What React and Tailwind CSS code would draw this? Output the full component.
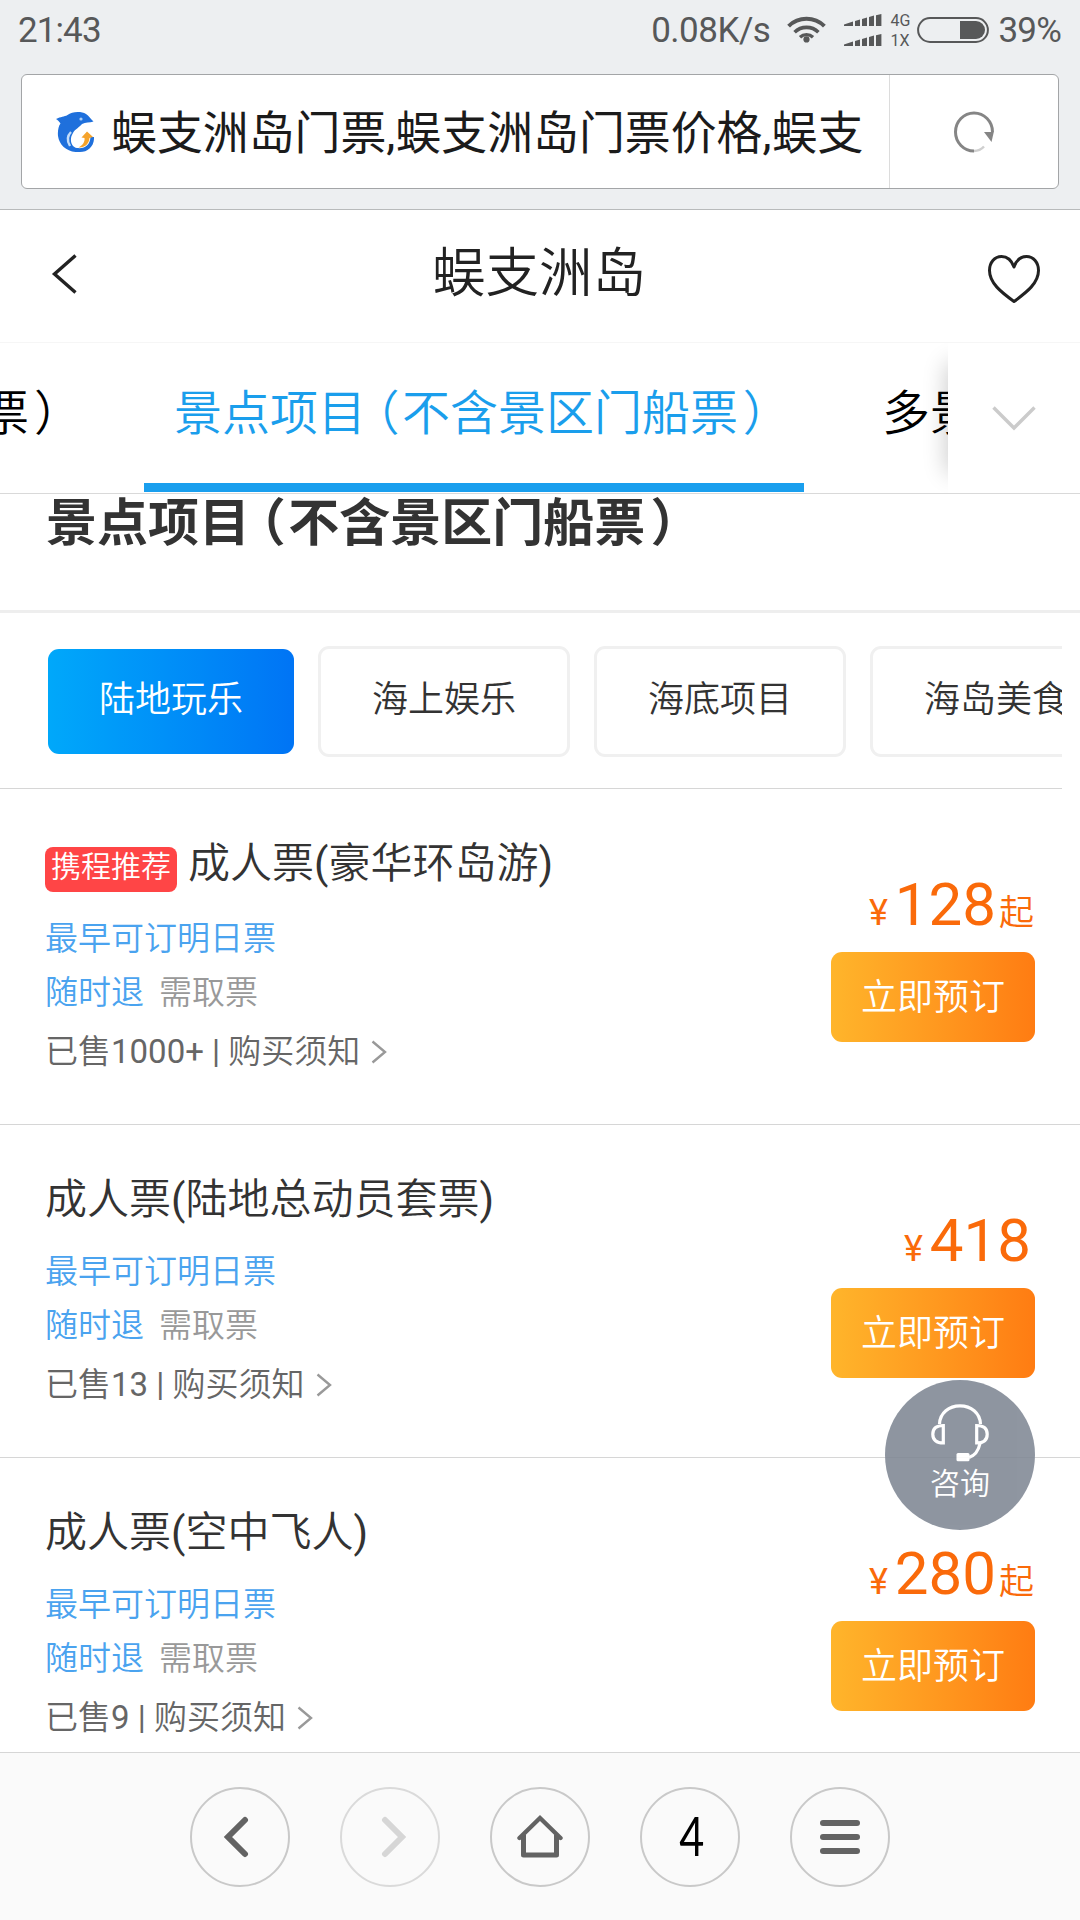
import React from "react";

const tickets = [
  { badge: "携程推荐", name: "成人票", detail: "豪华环岛游", sold: "1000+", price: "128", from: true },
  { name: "成人票", detail: "陆地总动员套票", sold: "13", price: "418", from: false },
  { name: "成人票", detail: "空中飞人", sold: "9", price: "280", from: true },
];

function WifiIcon() {
  return (
    <svg width="39" height="28" viewBox="0 0 39 28" fill="none" stroke="#575859" strokeWidth="4">
      <path d="M1.6 11.2a25.5 25.5 0 0 1 35.8 0" />
      <path d="M7.6 17.2a17 17 0 0 1 23.8 0" strokeWidth="3.6" />
      <path d="M13 22.2a9.6 9.6 0 0 1 13 0" strokeWidth="3.4" />
      <circle cx="19.5" cy="24.4" r="3.1" fill="#575859" stroke="none" />
    </svg>
  );
}

function Signal() {
  return (
    <svg width="38" height="12" viewBox="0 0 38 12" fill="#575859">
      <path d="M0 12V10.6L9 7.6V12zM11 12V7l5-1.6V12zM18 12V4.9l5-1.5V12zM25 12V3l5-1.4V12zM32 12V1.2L37.4 0V12z" />
    </svg>
  );
}

function Battery() {
  return (
    <svg width="72" height="26" viewBox="0 0 72 26">
      <rect x="1.1" y="1.1" width="69.8" height="23.8" rx="11.9" fill="none" stroke="#575859" strokeWidth="2" />
      <path d="M43 4h16a9 9 0 0 1 0 18H43z" fill="#575859" />
    </svg>
  );
}

function StatusBar() {
  return (
    <div className="flex h-[74px] items-start pr-[19px] pl-[18px] text-[35px] text-[#575859]">
      <span className="mt-[11px] leading-[40px] tracking-[-0.9px]">21:43</span>
      <div className="ml-auto flex items-start">
        <span className="mt-[11px] leading-[40px] tracking-[-0.5px]">0.08K/s</span>
        <span className="mt-[15px] ml-[17px]"><WifiIcon /></span>
        <span className="mt-[14px] ml-[18px] flex flex-col gap-[8px]">
          <Signal />
          <Signal />
        </span>
        <span className="mt-[11px] ml-[8px] flex w-[27px] flex-col text-[16px] leading-[20px]">
          <span>4G</span>
          <span>1X</span>
        </span>
        <span className="mt-[17px]"><Battery /></span>
        <span className="mt-[11px] ml-[9px] leading-[40px] tracking-[-0.8px]">39%</span>
      </div>
    </div>
  );
}

function Dolphin() {
  return (
    <svg width="38" height="40" viewBox="0 0 38 40">
      <path d="M0 7C5 4.500 8 5 11.500 3 16-.5 25-1 30 2c3 1.800 4 4.500 7.500 7.500-4 1.500-8 .5-11.500 2.500C24 15 19 17 17 21c-4 6-2 14 4 15 8 1 13-3 13.500-11L38 25c.5 9-6 15-14 15C12 41 3.500 34 2 24 1.500 19 2.500 14 4.500 11.500 3 9 1.500 8 0 7z" fill="#1f70dc" />
      <path d="M15 20c-4 4-4 9-1 14" fill="none" stroke="#c3dcf8" strokeWidth="2.400" />
      <path d="M31 19.500l6 5.500-3.500 1c-.5 6-5 10-11 9.500C27 33 29 30 28.500 26l-3-.500z" fill="#f5a32b" />
      <circle cx="25" cy="7" r="1.600" fill="#a9cdf6" />
    </svg>
  );
}

function AddressBar() {
  return (
    <div className="mx-[21px] flex h-[115px] rounded-[6px] border border-[#a3a5a7] bg-white">
      <div className="flex w-[868px] items-center border-r border-[#dcdcdc] pl-[34px]">
        <Dolphin />
        <span className="mt-[3px] ml-[17px] text-[45.9px] whitespace-nowrap text-[#1b1b1b]">蜈支洲岛门票,蜈支洲岛门票价格,蜈支</span>
      </div>
      <div className="flex flex-1 items-center justify-center">
        <svg width="42" height="42" viewBox="0 0 42 42" fill="none">
          <path d="M39.500 21A18.500 19 0 1 0 21 40" stroke="#858585" strokeWidth="3" />
          <path d="M21 40q6 0 10-4.500" stroke="#cfcfcf" strokeWidth="2.400" />
          <path d="M31 21h9.800l-2.300 10z" fill="#858585" />
        </svg>
      </div>
    </div>
  );
}

function PageHeader() {
  return (
    <div className="flex h-[133px] items-start border-b border-[#f6f6f6] pr-[39px] pl-[51px]">
      <svg className="mt-[44px]" width="54" height="40" viewBox="0 0 54 40" fill="none" stroke="#222" strokeWidth="3.400">
        <path d="M24.500 1.500L3.500 20 24.500 38.500" />
      </svg>
      <h1 className="mt-[33px] ml-[327px] text-[53.5px] leading-[62px] text-[#222]">蜈支洲岛</h1>
      <svg className="mt-[44px] ml-auto" width="54" height="50" viewBox="0 0 54 50" fill="none" stroke="#222" strokeWidth="3" strokeLinejoin="round">
        <path d="M27 13C24.500 6 19.500 2.500 14.500 2.500 7.500 2.500 2.500 8.500 2.500 16.500 2.500 29 14 38 27 47.500 40 38 51.500 29 51.500 16.500 51.500 8.500 46.500 2.500 39.500 2.500 34.500 2.500 29.500 6 27 13z" />
      </svg>
    </div>
  );
}

/* Full-width brackets set on half-width advances with a little air around them. */
function SectionName() {
  return (
    <>
      景点项目<span className="mr-[0.05em] ml-[0.2em] [font-feature-settings:'halt']">（</span>不含景区门船票<span className="mr-[0.15em] ml-[0.1em] [font-feature-settings:'halt']">）</span>
    </>
  );
}

function Tabs() {
  return (
    <div className="relative flex h-[151px] overflow-hidden border-b border-[#d9d9d9] text-[48px] leading-[56px] whitespace-nowrap">
      <div className="flex w-[144px] shrink-0 overflow-hidden pt-[43px] text-black">
        <span className="-ml-[19px]">票<span className="ml-[5px]">）</span></span>
      </div>
      <div className="flex w-[660px] shrink-0 flex-col justify-between pt-[43px] text-[#1a9eec]">
        <span className="pl-[30px]"><SectionName /></span>
        <span className="mb-px h-[9px] bg-[#1a9fee]" />
      </div>
      <span className="pt-[43px] pl-[78px] text-black">多景</span>
      <div className="absolute top-0 right-0 flex h-[150px] w-[132px] items-start justify-end bg-white pt-[62px] pr-[44px] shadow-[-22px_0_22px_-20px_rgba(0,0,0,0.2)]">
        <svg width="44" height="27" viewBox="0 0 44 27" fill="none" stroke="#cbcbcb" strokeWidth="3.400">
          <path d="M1.500 2.500L22 23 42.500 2.500" />
        </svg>
      </div>
    </div>
  );
}

function Chip({ children }) {
  return (
    <span className="h-[111px] w-[252px] shrink-0 rounded-[11px] border-[3px] border-[#f0f0f0] text-center leading-[103px]">
      {children}
    </span>
  );
}

function Filters() {
  return (
    <div className="mr-[18px] flex h-[176px] shrink-0 items-center gap-[24px] overflow-hidden border-b border-[#d6d6d6] pt-[2px] pl-[48px] text-[36px] text-[#333]">
      <span className="h-[105px] w-[246px] shrink-0 rounded-[11px] bg-linear-to-r from-[#00a8fa] to-[#0074f5] text-center leading-[103px] text-white">
        陆地玩乐
      </span>
      <Chip>海上娱乐</Chip>
      <Chip>海底项目</Chip>
      <Chip>海岛美食</Chip>
    </div>
  );
}

function Ticket({ badge, name, detail, sold, price, from }) {
  return (
    <div className="flex shrink-0 justify-between border-b border-[#d6d6d6] pr-[45px] pb-[44px] pl-[45px]">
      <div className="flex flex-col pt-[48px] text-[33px] leading-[54px] text-[#666]">
        <div className="mb-[18px] flex text-[42px] text-[#333]">
          {badge && (
            <span className="mt-[10px] mr-[11px] mb-[2px] h-[45px] w-[132px] rounded-[8px] bg-[#ff4546] text-center text-[30px] leading-[40px] text-white">
              {badge}
            </span>
          )}
          <span>
            {name}<span className="font-normal">(</span>{detail}<span className="font-normal">)</span>
          </span>
        </div>
        <div className="text-[#4aa3ef]">最早可订明日票</div>
        <div className="flex gap-[15px]">
          <span className="text-[#4aa3ef]">随时退</span>
          <span className="text-[#999]">需取票</span>
        </div>
        <div className="mt-[5px] mb-px flex items-center">
          <span>已售<span className="font-normal">{sold} | </span>购买须知</span>
          <svg className="ml-[11px]" width="16" height="24" viewBox="0 0 16 24" fill="none" stroke="#999" strokeWidth="2.400">
            <path d="M1.500 1.500L14 12 1.500 22.500" />
          </svg>
        </div>
      </div>
      <div className="flex w-[204px] flex-col pt-[80px]">
        <div className={from ? "flex items-baseline justify-end pr-px text-[#fa6a0a]" : "flex items-baseline justify-end pr-[4px] text-[#fa6a0a]"}>
          <span className="mr-[7px] text-[36px] font-normal">¥</span>
          <span className="text-[60px] leading-[72px] font-normal">{price}</span>
          {from && <span className="ml-[3px] text-[35px] leading-[36px]">起</span>}
        </div>
        <button className="mt-[11px] h-[90px] rounded-[11px] bg-linear-to-r from-[#ffb52b] to-[#ff7c12] pt-[2px] text-[36px] leading-[88px] text-white">
          立即预订
        </button>
      </div>
    </div>
  );
}

function ConsultButton() {
  return (
    <div className="absolute top-[1380px] right-[45px] flex h-[150px] w-[150px] flex-col items-center rounded-full bg-[#7f8794] pt-[24px] text-[30px] text-white opacity-[0.88]">
      <svg width="58" height="58" viewBox="0 0 58 58" fill="none" stroke="#fff" strokeWidth="3.200">
        <path d="M8.500 20C9 9 18 1.800 29 1.800S49 9 49.500 20" />
        <path d="M12.300 21.500v17.500C5.500 39 1.800 36 1.800 30.300S5.500 21.500 12.300 21.500z" />
        <path d="M45.700 21.500v17.500C52.500 39 56.200 36 56.200 30.300S52.500 21.500 45.700 21.500z" />
        <path d="M49 39.500c-1.500 7-5 12-11 14" />
        <rect x="25.500" y="49" width="13" height="8.200" rx="1.500" fill="#fff" stroke="none" />
      </svg>
      <span className="mt-px leading-[42px]">咨询</span>
    </div>
  );
}

function NavButton({ children }) {
  return (
    <span className="flex h-[100px] w-[100px] items-center justify-center rounded-full border-2 border-[#c9c9c9]">
      {children}
    </span>
  );
}

function BottomBar() {
  return (
    <div className="flex h-[168px] shrink-0 justify-center gap-[50px] border-t border-[#d6d6d6] bg-[#fafafa] pt-[34px]">
      <NavButton>
        <svg className="-ml-[8px]" width="26" height="42" viewBox="0 0 26 42" fill="none" stroke="#636363" strokeWidth="6" strokeLinecap="round">
          <path d="M22 4L5 21l17 17" />
        </svg>
      </NavButton>
      <span className="flex h-[100px] w-[100px] items-center justify-center rounded-full border-2 border-[#dadada]">
        <svg className="ml-[8px]" width="26" height="42" viewBox="0 0 26 42" fill="none" stroke="#d6d6d6" strokeWidth="6" strokeLinecap="round">
          <path d="M4 4l17 17L4 38" />
        </svg>
      </span>
      <NavButton>
        <svg className="-mt-[3px]" width="46" height="46" viewBox="0 0 46 46" fill="none" stroke="#636363" strokeWidth="5" strokeLinejoin="round">
          <path d="M6.500 21.500V42h33V21.500" />
          <path d="M2.500 25L23 5l20.500 20" strokeWidth="4.400" strokeLinecap="round" strokeLinejoin="miter" />
        </svg>
      </NavButton>
      <NavButton>
        <span className="mb-[3px] ml-[3px] inline-block scale-x-[0.8] font-['Lato'] text-[54px] leading-[60px] font-normal text-black">4</span>
      </NavButton>
      <NavButton>
        <span className="flex w-[40px] flex-col gap-[8px]">
          <span className="h-[6px] rounded-full bg-[#636363]" />
          <span className="h-[6px] rounded-full bg-[#636363]" />
          <span className="h-[6px] rounded-full bg-[#636363]" />
        </span>
      </NavButton>
    </div>
  );
}

export default function App() {
  return (
    <div className="relative flex h-[1920px] w-[1080px] flex-col overflow-hidden bg-white font-[350] [font-family:Roboto,'Noto_Sans_CJK_SC',sans-serif]">
      <header className="h-[210px] shrink-0 border-b border-[#b8babb] bg-[#edeff1] font-normal">
        <StatusBar />
        <AddressBar />
      </header>
      <PageHeader />
      <Tabs />
      <main className="flex min-h-0 flex-1 flex-col overflow-hidden">
        <h2 className="h-[119px] shrink-0 border-b-[3px] border-[#eee] pl-[46px] text-[51px] leading-[60px] font-bold text-[#333]">
          <SectionName />
        </h2>
        <Filters />
        {tickets.map((ticket) => (
          <Ticket key={ticket.detail} {...ticket} />
        ))}
      </main>
      <BottomBar />
      <ConsultButton />
    </div>
  );
}
